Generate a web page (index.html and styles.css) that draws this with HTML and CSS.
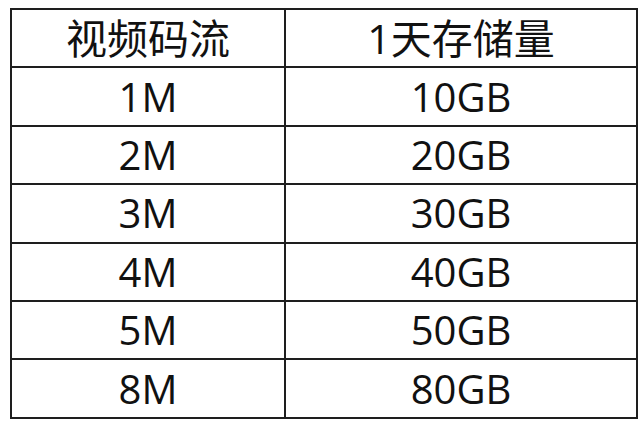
FILE: index.html
```html
<!DOCTYPE html>
<html lang="zh">
<head>
<meta charset="utf-8">
<link rel="stylesheet" href="styles.css">
</head>
<body>
<table class="rate-table">
  <tr class="head"><td class="c1">视频码流</td><td class="c2">1天存储量</td></tr>
  <tr><td class="c1">1M</td><td class="c2">10GB</td></tr>
  <tr><td class="c1">2M</td><td class="c2">20GB</td></tr>
  <tr><td class="c1">3M</td><td class="c2">30GB</td></tr>
  <tr><td class="c1">4M</td><td class="c2">40GB</td></tr>
  <tr><td class="c1">5M</td><td class="c2">50GB</td></tr>
  <tr><td class="c1">8M</td><td class="c2">80GB</td></tr>
</table>
</body>
</html>
```
FILE: styles.css
```css
html, body {
  margin: 0;
  padding: 0;
  background: #ffffff;
}
body {
  padding: 8px 0 0 10px;
}
.rate-table {
  border-collapse: collapse;
  table-layout: fixed;
  width: 622px;
  font-family: "Open Sans", "Noto Sans CJK SC", sans-serif;
  font-size: 40px;
  color: #111111;
}
.rate-table td {
  border: 2px solid #1e1e1e;
  height: 56.4px;
  padding: 0;
  text-align: center;
  vertical-align: middle;
  line-height: 1;
}
.head td {
  font-size: 41px;
}
.c1 { width: 272px; }
.c2 { width: 350px; }
```
